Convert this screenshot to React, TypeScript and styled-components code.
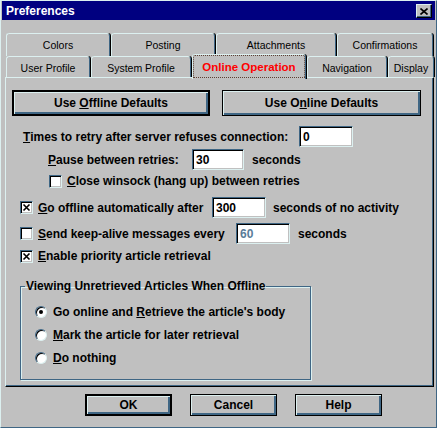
import styled, { createGlobalStyle } from "styled-components";

const face = "#c0c0c0";
const hi = "#dcf0f0";
const shadow = "#3f6684";
const dark = "#000000";
const navy = "#000080";

const GlobalStyle = createGlobalStyle`
  html, body {
    margin: 0;
    background: ${face};
  }
  body {
    font-family: "Liberation Sans", Arial, sans-serif;
    font-size: 12px;
    color: ${dark};
  }
`;

const Window = styled.div`
  width: 437px;
  height: 428px;
  box-sizing: border-box;
  background: ${face};
  border: 1px solid;
  border-color: ${hi} ${shadow} ${shadow} ${hi};
  padding: 0 1px 1px 1px;
  display: flex;
  flex-direction: column;
`;

const TitleBar = styled.div`
  height: 19px;
  background: ${navy};
  display: flex;
  align-items: center;
  justify-content: space-between;
  padding: 0 3px 0 4px;
`;

const Title = styled.span`
  color: #fff;
  font-weight: bold;
  font-size: 12px;
`;

const CloseButton = styled.div`
  width: 16px;
  height: 14px;
  box-sizing: border-box;
  background: ${face};
  border: 1px solid;
  border-color: ${hi} ${dark} ${dark} ${hi};
  box-shadow: inset -1px -1px 0 ${shadow};
  display: flex;
  align-items: center;
  justify-content: center;
  margin-top: 1px;
`;

const Body = styled.div`
  padding: 13px 0 0 3px;
  display: flex;
  flex-direction: column;
`;

const TabRow = styled.div<{ $h: number }>`
  display: flex;
  align-items: flex-end;
  gap: 1px;
  height: ${(p) => p.$h}px;
  padding-left: 1px;
`;

const Tab = styled.div<{ $w: number; $h: number; $pt?: number }>`
  width: ${(p) => p.$w}px;
  height: ${(p) => p.$h}px;
  box-sizing: border-box;
  padding-top: ${(p) => p.$pt ?? 0}px;
  border-top: 1px solid ${hi};
  border-left: 1px solid ${hi};
  border-right: 1px solid ${shadow};
  box-shadow: 1px 0 0 ${dark};
  border-radius: 3px 3px 0 0;
  display: flex;
  align-items: center;
  justify-content: center;
  font-size: 10.5px;
  background: ${face};
`;

const ActiveTab = styled(Tab)`
  position: relative;
  z-index: 2;
  margin-bottom: -2px;
  color: #ff0000;
  font-weight: bold;
  font-size: 11.5px;
  outline: 1px dotted #5c4033;
  outline-offset: -2px;
`;

const Panel = styled.div`
  width: 429px;
  height: 310px;
  box-sizing: border-box;
  border: 1px solid;
  border-color: ${hi} ${dark} ${dark} ${hi};
  box-shadow: inset -1px -1px 0 ${shadow};
  padding: 12px 0 0 6px;
  display: flex;
  flex-direction: column;
  font-weight: bold;
`;

const ButtonRow = styled.div`
  display: flex;
  gap: 12px;
`;

const Button = styled.div<{ $w: number; $h: number; $default?: boolean }>`
  width: ${(p) => p.$w}px;
  height: ${(p) => p.$h}px;
  box-sizing: border-box;
  border: ${(p) => (p.$default ? 2 : 1)}px solid ${dark};
  box-shadow: inset 1px 1px 0 ${hi}, inset -1px -1px 0 ${shadow},
    inset -2px -2px 0 ${shadow};
  background: ${face};
  display: flex;
  align-items: center;
  justify-content: center;
  font-weight: bold;
  font-size: 12px;
`;

const Row = styled.div<{ $indent: number; $mt: number; $h: number }>`
  display: flex;
  align-items: center;
  padding-left: ${(p) => p.$indent}px;
  margin-top: ${(p) => p.$mt}px;
  height: ${(p) => p.$h}px;
  white-space: nowrap;
`;

const Label = styled.div<{ $w?: number }>`
  display: flex;
  align-items: center;
  gap: 5px;
  width: ${(p) => (p.$w ? `${p.$w}px` : "auto")};
  flex-shrink: 0;
`;

const Key = styled.span`
  text-decoration: underline;
`;

const Field = styled.input<{ $w: number }>`
  width: ${(p) => p.$w}px;
  height: 21px;
  box-sizing: border-box;
  margin: 0;
  padding: 0 0 0 3px;
  background: #fff;
  border: 1px solid;
  border-color: ${shadow} ${hi} ${hi} ${shadow};
  box-shadow: inset 1px 1px 0 ${dark}, inset -1px -1px 0 ${face};
  font-family: inherit;
  font-weight: bold;
  font-size: 12px;
  color: ${dark};
  outline: none;
  &:disabled {
    color: #5a7c98;
  }
`;

const Suffix = styled.span<{ $ml: number }>`
  margin-left: ${(p) => p.$ml}px;
`;

const Box = styled.span`
  width: 13px;
  height: 13px;
  box-sizing: border-box;
  flex-shrink: 0;
  background: #fff;
  border: 1px solid;
  border-color: ${shadow} ${hi} ${hi} ${shadow};
  box-shadow: inset 1px 1px 0 ${dark}, inset -1px -1px 0 ${face};
  display: flex;
  align-items: center;
  justify-content: center;
`;

const Group = styled.fieldset`
  width: 291px;
  height: 101px;
  box-sizing: border-box;
  margin: 15px 0 0 8px;
  padding: 0 0 0 14px;
  border: 1px solid ${shadow};
  box-shadow: inset 1px 1px 0 ${hi}, 1px 1px 0 ${hi};
`;

const Legend = styled.legend`
  padding: 0 1px;
  margin-left: -10px;
  line-height: 14px;
  font-weight: bold;
`;

const RadioList = styled.div`
  display: flex;
  flex-direction: column;
  gap: 5px;
  padding-top: 10px;
`;

const RadioRow = styled.div`
  display: flex;
  align-items: center;
  gap: 6px;
  height: 18px;
`;

const Radio = styled.span<{ $on?: boolean }>`
  width: 12px;
  height: 12px;
  box-sizing: border-box;
  border-radius: 50%;
  background: #fff;
  border: 1px solid;
  border-color: ${shadow} ${hi} ${hi} ${shadow};
  box-shadow: inset 1px 1px 0 ${dark};
  display: flex;
  align-items: center;
  justify-content: center;
  &::after {
    content: "";
    width: 4px;
    height: 4px;
    border-radius: 50%;
    background: ${(p) => (p.$on ? dark : "transparent")};
  }
`;

const Footer = styled.div`
  display: flex;
  gap: 18px;
  padding: 7px 0 0 80px;
`;

function Cross() {
  return (
    <svg width="9" height="9" viewBox="0 0 9 9">
      <path d="M1.5 1.5 L7.5 7.5 M7.5 1.5 L1.5 7.5" stroke="#000" strokeWidth="1.6" />
    </svg>
  );
}

function Check({ on, children }: { on?: boolean; children: React.ReactNode }) {
  return (
    <>
      <Box>{on && <Cross />}</Box>
      <span>{children}</span>
    </>
  );
}

const backTabs = [
  { label: "Colors", w: 104 },
  { label: "Posting", w: 104 },
  { label: "Attachments", w: 120 },
  { label: "Confirmations", w: 96 },
];

const frontTabs = [
  { label: "User Profile", w: 84 },
  { label: "System Profile", w: 100 },
  { label: "Online Operation", w: 114, active: true },
  { label: "Navigation", w: 80 },
  { label: "Display", w: 46 },
];

export default function App() {
  return (
    <>
      <GlobalStyle />
      <Window>
        <TitleBar>
          <Title>Preferences</Title>
          <CloseButton>
            <svg width="8" height="7" viewBox="0 0 8 7">
              <path d="M0.5 0.5 L7.5 6.5 M7.5 0.5 L0.5 6.5" stroke="#000" strokeWidth="1.6" />
            </svg>
          </CloseButton>
        </TitleBar>
        <Body>
          <TabRow $h={23}>
            {backTabs.map((t) => (
              <Tab key={t.label} $w={t.w} $h={23}>
                {t.label}
              </Tab>
            ))}
          </TabRow>
          <TabRow $h={21}>
            {frontTabs.map((t) =>
              t.active ? (
                <ActiveTab key={t.label} $w={t.w} $h={25}>
                  {t.label}
                </ActiveTab>
              ) : (
                <Tab key={t.label} $w={t.w} $h={21} $pt={2}>
                  {t.label}
                </Tab>
              )
            )}
          </TabRow>
          <Panel>
            <ButtonRow>
              <Button $w={198} $h={26} $default>
                Use&nbsp;<Key>O</Key>ffline Defaults
              </Button>
              <Button $w={199} $h={26}>
                Use O<Key>n</Key>line Defaults
              </Button>
            </ButtonRow>

            <Row $indent={11} $mt={10} $h={21}>
              <Label $w={276}>
                <span>
                  <Key>T</Key>imes to retry after server refuses connection:
                </span>
              </Label>
              <Field $w={54} defaultValue="0" />
            </Row>

            <Row $indent={36} $mt={2} $h={21}>
              <Label $w={144}>
                <span>
                  <Key>P</Key>ause between retries:
                </span>
              </Label>
              <Field $w={52} defaultValue="30" />
              <Suffix $ml={8}>seconds</Suffix>
            </Row>

            <Row $indent={37} $mt={3} $h={16}>
              <Label>
                <Check>
                  <Key>C</Key>lose winsock (hang up) between retries
                </Check>
              </Label>
            </Row>

            <Row $indent={8} $mt={8} $h={21}>
              <Label $w={192}>
                <Check on>
                  <Key>G</Key>o offline automatically after
                </Check>
              </Label>
              <Field $w={54} defaultValue="300" />
              <Suffix $ml={7}>seconds of no activity</Suffix>
            </Row>

            <Row $indent={8} $mt={5} $h={21}>
              <Label $w={216}>
                <Check>
                  <Key>S</Key>end keep-alive messages every
                </Check>
              </Label>
              <Field $w={54} defaultValue="60" disabled />
              <Suffix $ml={8}>seconds</Suffix>
            </Row>

            <Row $indent={8} $mt={4} $h={16}>
              <Label>
                <Check on>
                  <Key>E</Key>nable priority article retrieval
                </Check>
              </Label>
            </Row>

            <Group>
              <Legend>Viewing Unretrieved Articles When Offline</Legend>
              <RadioList>
                <RadioRow>
                  <Radio $on />
                  <span>
                    Go online and <Key>R</Key>etrieve the article's body
                  </span>
                </RadioRow>
                <RadioRow>
                  <Radio />
                  <span>
                    <Key>M</Key>ark the article for later retrieval
                  </span>
                </RadioRow>
                <RadioRow>
                  <Radio />
                  <span>
                    <Key>D</Key>o nothing
                  </span>
                </RadioRow>
              </RadioList>
            </Group>
          </Panel>
          <Footer>
            <Button $w={87} $h={22} $default>
              OK
            </Button>
            <Button $w={87} $h={22}>
              Cancel
            </Button>
            <Button $w={87} $h={22}>
              Help
            </Button>
          </Footer>
        </Body>
      </Window>
    </>
  );
}
